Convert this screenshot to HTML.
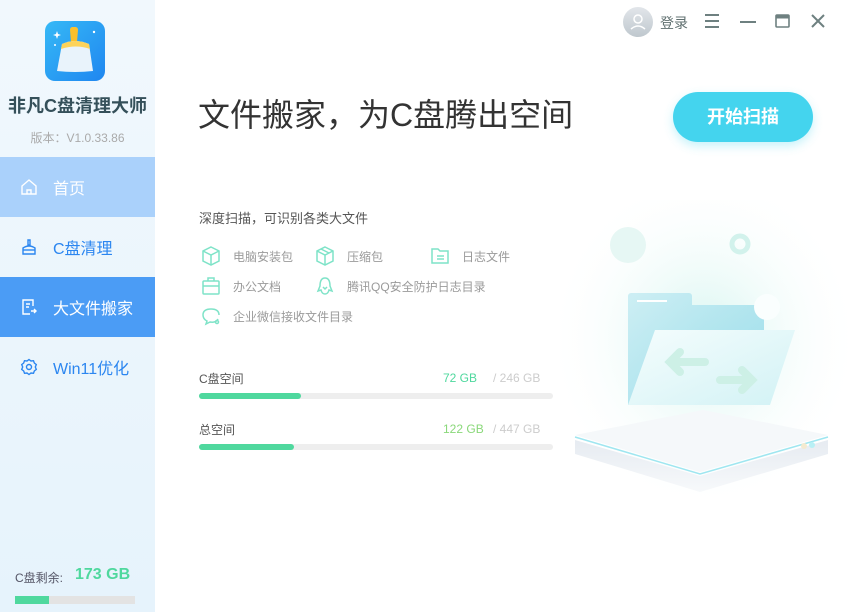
<!DOCTYPE html>
<html><head><meta charset="utf-8"><style>
*{margin:0;padding:0;box-sizing:border-box}
body{width:848px;height:612px;overflow:hidden;background:#fff;font-family:"Liberation Sans","Noto Sans CJK SC",sans-serif;position:relative}
.side{position:absolute;left:0;top:0;width:155px;height:612px;background:linear-gradient(180deg,#f1f8fd,#e6f3fc)}
.abs{position:absolute}
.nav{position:absolute;left:0;width:155px;height:60px;font-size:16px;color:#2b86f0;display:flex;align-items:center}
.nav svg{margin-left:20px;margin-right:15px}
.feat{position:absolute;font-size:12px;color:#9a9a9a;display:flex;align-items:center}
.feat svg{margin-right:12px}
.bar{position:absolute;left:199px;width:354px;height:6px;border-radius:3px;background:#eeeeee}
.bar i{display:block;height:6px;border-radius:3px;background:#4fd89e}
</style></head><body>
<div class="side">
  <div class="abs" style="left:45px;top:21px;width:60px;height:60px;border-radius:10px;background:linear-gradient(135deg,#36b9f6,#1f86f0)">
    <svg width="60" height="60" viewBox="0 0 60 60"><path d="M30 6c2 0 3 1 3 3l-1 12h-6l-1-12c0-2 1-3 3-3z" fill="#fbc02d"/><path d="M17 23q13-6 27 0l4 27q-18 2-36 0z" fill="#e9f3fb"/><path d="M17 23q13-6 27 0l1 5q-14-5-29 0z" fill="#fdd35a"/><path d="M12 10l1 3 3 1-3 1-1 3-1-3-3-1 3-1z" fill="#fff"/><circle cx="49" cy="11" r="1.2" fill="#fff"/><circle cx="10" cy="24" r="1" fill="#fff"/></svg>
  </div>
  <div class="abs" style="left:0;width:155px;top:92px;text-align:center;font-size:18px;font-weight:bold;color:#35505a">非凡C盘清理大师</div>
  <div class="abs" style="left:0;width:155px;top:129px;text-align:center;font-size:12px;color:#aaa">版本：V1.0.33.86</div>
  <div class="nav" style="top:157px;background:#aad1fb;color:#fff"><svg width="18" height="18" viewBox="0 0 18 18" fill="none" stroke="#fff" stroke-width="1.4"><path d="M2 8L9 2l7 6v8H2z"/><path d="M7 16v-4h4v4"/></svg>首页</div>
  <div class="nav" style="top:217px"><svg width="18" height="18" viewBox="0 0 18 18" fill="none" stroke="#2b86f0" stroke-width="1.4"><path d="M8 2h2v5H8z"/><path d="M3 10q6-4 12 0v6H3z"/><path d="M3 12h12"/></svg>C盘清理</div>
  <div class="nav" style="top:277px;background:#4b9cf5;color:#fff"><svg width="18" height="18" viewBox="0 0 18 18" fill="none" stroke="#fff" stroke-width="1.4"><path d="M13 8V2H3v14h7"/><path d="M6 6h4M6 9h3"/><path d="M11 13h5M14 11l2 2-2 2"/></svg>大文件搬家</div>
  <div class="nav" style="top:337px"><svg width="18" height="18" viewBox="0 0 18 18" fill="none" stroke="#2b86f0" stroke-width="1.4"><circle cx="9" cy="9" r="2.5"/><path d="M9 1.5l2 1.5 2.5-.3.8 2.3 2 1.6-1 2.4 1 2.4-2 1.6-.8 2.3-2.5-.3-2 1.5-2-1.5-2.5.3-.8-2.3-2-1.6 1-2.4-1-2.4 2-1.6.8-2.3 2.5.3z"/></svg>Win11优化</div>
  <div class="abs" style="left:15px;top:569px;font-size:12px;color:#556">C盘剩余:</div>
  <div class="abs" style="left:75px;top:566px;font-size:16px;font-weight:bold;color:#4fd89e">173 GB</div>
  <div class="abs" style="left:15px;top:596px;width:120px;height:8px;background:#e3e3e3"><div style="width:34px;height:8px;background:#4fd89e"></div></div>
</div>

<div class="abs" style="left:623px;top:7px;width:30px;height:30px;border-radius:50%;background:linear-gradient(180deg,#e2e6ea,#bfc8ce)"><svg width="30" height="30" viewBox="0 0 30 30" fill="none" stroke="#fff" stroke-width="1.5"><circle cx="15" cy="12" r="4"/><path d="M8 22q7-6 14 0"/></svg></div>
<div class="abs" style="left:660px;top:13px;font-size:14px;color:#607070">登录</div>
<svg class="abs" style="left:703px;top:12px" width="18" height="18" viewBox="0 0 18 18" stroke="#6e8080" stroke-width="2"><path d="M2 3h14M2 9h14M2 15h14"/></svg>
<svg class="abs" style="left:739px;top:12px" width="18" height="18" viewBox="0 0 18 18" stroke="#6e8080" stroke-width="2"><path d="M1 10h16"/></svg>
<svg class="abs" style="left:775px;top:12px" width="16" height="18" viewBox="0 0 16 18" fill="none" stroke="#6e8080" stroke-width="1.6"><rect x="1" y="3" width="13" height="12" rx="1"/><path d="M1 5h13" stroke-width="3"/></svg>
<svg class="abs" style="left:810px;top:13px" width="16" height="16" viewBox="0 0 16 16" stroke="#6e8080" stroke-width="2"><path d="M2 2l12 12M14 2L2 14"/></svg>

<div class="abs" style="left:198px;top:90px;font-size:32px;color:#333;white-space:nowrap">文件搬家，为C盘腾出空间</div>
<div class="abs" style="left:673px;top:92px;width:140px;height:50px;border-radius:25px;background:#44d4ee;box-shadow:0 4px 10px rgba(68,212,238,.3);color:#fff;font-size:18px;font-weight:bold;text-align:center;line-height:50px">开始扫描</div>

<div class="abs" style="left:199px;top:208px;font-size:13px;color:#555">深度扫描，可识别各类大文件</div>
<div class="feat" style="left:201px;top:246px"><svg width="20" height="20" viewBox="0 0 20 20" fill="none" stroke="#7fe3c8" stroke-width="1.5"><path d="M10 1l8 4v10l-8 4-8-4V5z"/><path d="M2 5l8 4 8-4M10 9v10"/></svg>电脑安装包</div>
<div class="feat" style="left:315px;top:246px"><svg width="20" height="20" viewBox="0 0 20 20" fill="none" stroke="#7fe3c8" stroke-width="1.5"><path d="M10 1l8 4v10l-8 4-8-4V5z"/><path d="M2 5l8 4 8-4M10 9v10M6 3l8 4"/></svg>压缩包</div>
<div class="feat" style="left:430px;top:246px"><svg width="20" height="20" viewBox="0 0 20 20" fill="none" stroke="#7fe3c8" stroke-width="1.5"><path d="M2 3h6l2 2h8v12H2z"/><path d="M7 10h7M7 13h7"/></svg>日志文件</div>
<div class="feat" style="left:201px;top:276px"><svg width="20" height="20" viewBox="0 0 20 20" fill="none" stroke="#7fe3c8" stroke-width="1.5"><rect x="2" y="5" width="16" height="13" rx="1"/><path d="M7 5V2h6v3M2 10h16"/></svg>办公文档</div>
<div class="feat" style="left:315px;top:276px"><svg width="20" height="20" viewBox="0 0 20 20" fill="none" stroke="#7fe3c8" stroke-width="1.5"><path d="M5 10q0-8 5-8t5 8l2 5-3-1q-1 4-4 4t-4-4l-3 1z"/><path d="M8 11l2 2 2-2"/></svg>腾讯QQ安全防护日志目录</div>
<div class="feat" style="left:201px;top:306px"><svg width="20" height="20" viewBox="0 0 20 20" fill="none" stroke="#7fe3c8" stroke-width="1.5"><path d="M18 9q0-6-8-6T2 9q0 4 4 6l-1 3 4-2q6 1 8-3"/><circle cx="16" cy="16" r="1.5"/></svg>企业微信接收文件目录</div>

<div class="abs" style="left:199px;top:370px;font-size:12px;color:#555">C盘空间</div>
<div class="abs" style="left:443px;top:371px;font-size:12px;color:#4fd89e">72 GB</div>
<div class="abs" style="left:493px;top:371px;font-size:12px;color:#ccc">/ 246 GB</div>
<div class="bar" style="top:393px"><i style="width:102px"></i></div>
<div class="abs" style="left:199px;top:421px;font-size:12px;color:#555">总空间</div>
<div class="abs" style="left:443px;top:422px;font-size:12px;color:#8ad87a">122 GB</div>
<div class="abs" style="left:493px;top:422px;font-size:12px;color:#ccc">/ 447 GB</div>
<div class="bar" style="top:444px"><i style="width:95px"></i></div>

<svg class="abs" style="left:560px;top:200px" width="288" height="310" viewBox="0 0 288 310">
<defs><radialGradient id="g" cx="50%" cy="45%" r="55%"><stop offset="0" stop-color="#d6f5f0"/><stop offset="1" stop-color="#fff" stop-opacity="0"/></radialGradient>
<linearGradient id="f" x1="0" y1="0" x2="1" y2="1"><stop offset="0" stop-color="#c9edf3"/><stop offset="1" stop-color="#8fd9e8"/></linearGradient>
<linearGradient id="p" x1="0" y1="0" x2="1" y2="1"><stop offset="0" stop-color="#f5fdfd"/><stop offset="1" stop-color="#d2f2f5"/></linearGradient>
<linearGradient id="d" x1="0" y1="0" x2="0" y2="1"><stop offset="0" stop-color="#e6ebf1"/><stop offset="1" stop-color="#f7f9fb"/></linearGradient></defs>
<rect width="288" height="310" fill="url(#g)"/>
<circle cx="68" cy="45" r="18" fill="#e6f7f4"/><circle cx="180" cy="44" r="8" fill="none" stroke="#d2f2ec" stroke-width="5"/>
<path d="M15 240v14l125 38 128-38v-14L140 276z" fill="url(#d)"/>
<path d="M15 235l125 37 128-37-125-25z" fill="#f5f8fa"/>
<path d="M15 237l125 37 128-37" fill="none" stroke="#9fe6f0" stroke-width="1.5"/>
<circle cx="244" cy="246" r="3" fill="#f4ead0"/><circle cx="252" cy="245" r="3" fill="#b8f0f5"/>
<path d="M68 96a3 3 0 0 1 3-3h58a3 3 0 0 1 3 3v9h72v100H68z" fill="url(#f)" opacity=".9"/>
<path d="M77 101h30" stroke="#fff" stroke-width="2"/>
<circle cx="207" cy="107" r="13" fill="#fafefe"/>
<path d="M95 130h140l-25 75H68z" fill="url(#p)"/>
<path d="M145 162h-35M120 152l-10 10 10 10M160 180h30M182 170l10 10-10 10" stroke="#cdf0e6" stroke-width="8" fill="none" stroke-linecap="round"/>
</svg>
</body></html>
